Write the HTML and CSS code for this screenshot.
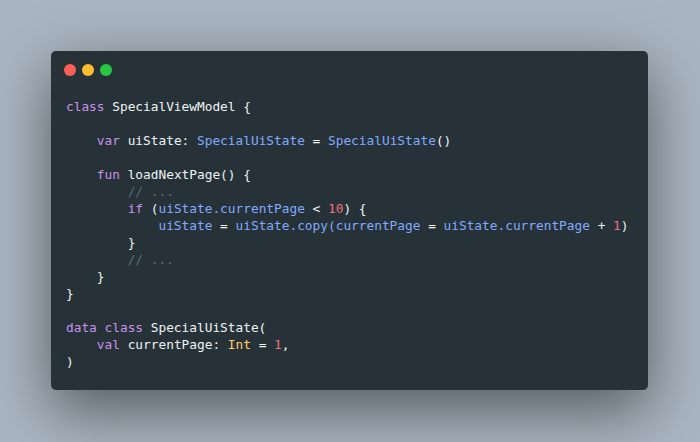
FILE: index.html
```html
<!DOCTYPE html>
<html>
<head>
<meta charset="utf-8">
<link rel="stylesheet" href="styles.css">
</head>
<body>
<div class="window">
  <div class="titlebar">
    <span class="dot red"></span>
    <span class="dot yellow"></span>
    <span class="dot green"></span>
  </div>
<pre class="code"><span class="kw">class</span> SpecialViewModel {

    <span class="kw">var</span> uiState: <span class="fn">SpecialUiState</span> = <span class="fn">SpecialUiState</span>()

    <span class="kw">fun</span> loadNextPage() {
        <span class="cm">// ...</span>
        <span class="kw">if</span> (<span class="fn">uiState.currentPage</span> &lt; <span class="num">10</span>) {
            <span class="fn">uiState</span> = <span class="fn">uiState.copy(currentPage</span> = <span class="fn">uiState.currentPage</span> + <span class="num">1</span>)
        }
        <span class="cm">// ...</span>
    }
}

<span class="kw">data class</span> SpecialUiState(
    <span class="kw">val</span> currentPage: <span class="ty">Int</span> = <span class="num">1</span>,
)</pre>
</div>
</body>
</html>
```
FILE: styles.css
```css
html, body {
  margin: 0;
  padding: 0;
}
body {
  width: 700px;
  height: 442px;
  background: #a9b5c0;
  box-sizing: border-box;
  padding: 51px 0 0 51px;
  overflow: hidden;
}
.window {
  width: 597px;
  height: 339px;
  background: #263238;
  border-radius: 5px;
  box-shadow: 0 20px 60px rgba(0, 0, 0, 0.5);
  box-sizing: border-box;
}
.titlebar {
  display: flex;
  gap: 6px;
  padding: 13px 0 0 13px;
}
.dot {
  width: 12px;
  height: 12px;
  border-radius: 50%;
  display: block;
}
.red { background: #ff5f56; }
.yellow { background: #ffbd2e; }
.green { background: #27c93f; }
.code {
  margin: 22px 0 0 15px;
  font-family: "DejaVu Sans Mono", monospace;
  font-size: 12.8px;
  line-height: 17px;
  color: #eef2f4;
}
.kw { color: #c792ea; }
.fn { color: #82aaff; }
.num { color: #f07178; }
.ty { color: #ffcb6b; }
.cm { color: #546e7a; }
```
